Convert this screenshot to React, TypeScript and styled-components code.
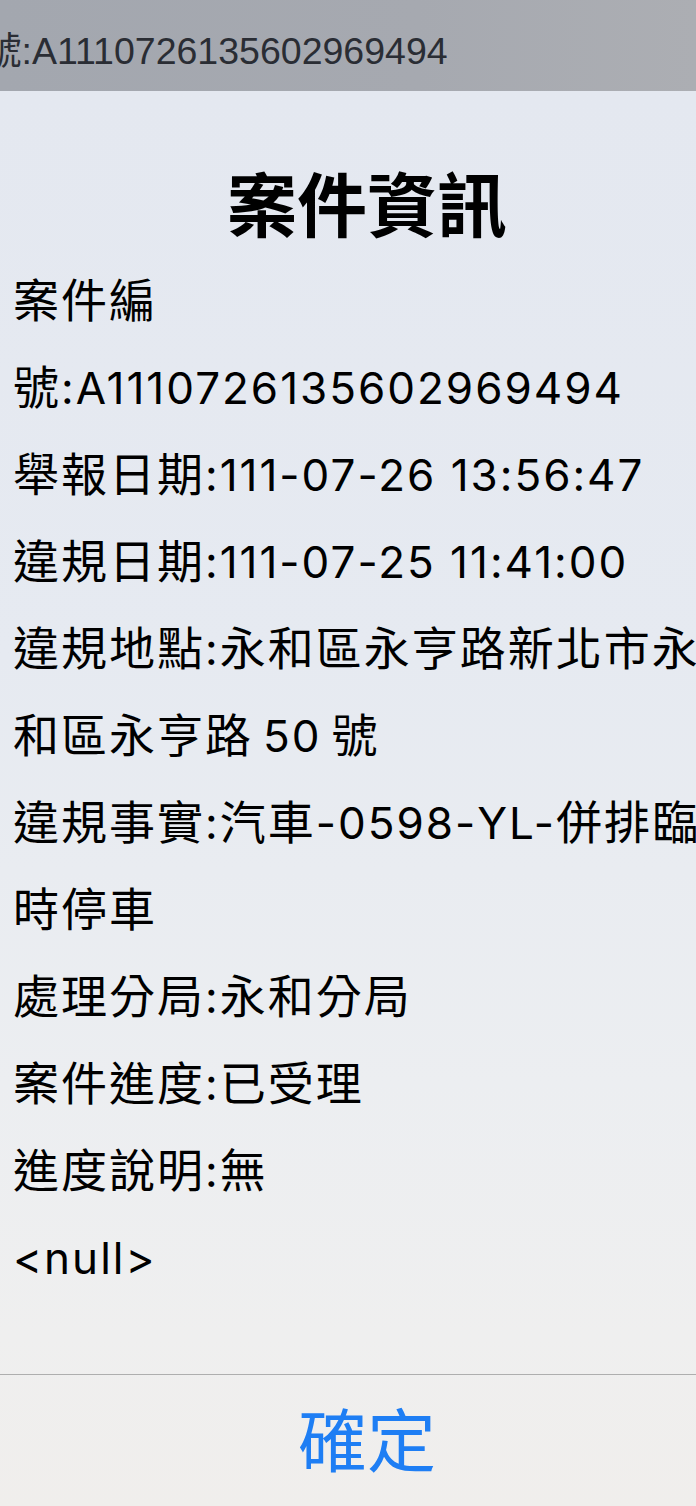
import React from "react";
import styled, { createGlobalStyle } from "styled-components";

const GlobalStyle = createGlobalStyle`
  html, body {
    margin: 0;
    padding: 0;
    background: #a6a9b0;
    overflow: hidden;
  }
  * { box-sizing: border-box; }
`;

const Screen = styled.div`
  width: 696px;
  height: 1506px;
  overflow: hidden;
  display: flex;
  flex-direction: column;
  background: linear-gradient(90deg, #a3a7af 0%, #a6a9b0 60%, #acaeb3 100%);
`;

const TopBar = styled.div`
  height: 91px;
  flex: none;
  display: flex;
  align-items: center;
  padding-top: 4px;
  overflow: hidden;
`;

const BarText = styled.span`
  margin-left: -16px;
  white-space: nowrap;
  font-family: "Liberation Sans", Arial, "Noto Sans CJK TC", sans-serif;
  font-size: 37.5px;
  color: #2a2d34;
`;

const Dialog = styled.div`
  width: 734px;
  flex: 1;
  display: flex;
  flex-direction: column;
  background: linear-gradient(
    180deg,
    #e4e8f0 0%,
    #e6eaf1 40%,
    #eceef1 70%,
    #efefef 88%,
    #f0eeec 100%
  );
`;

const Content = styled.div`
  flex: 1;
  padding: 71px 13px 0;
`;

const Title = styled.h1`
  margin: 0 0 16px;
  text-align: center;
  font-family: "Noto Sans CJK TC", sans-serif;
  font-weight: 700;
  font-size: 70px;
  line-height: 80px;
  color: #000;
`;

const InfoLine = styled.p`
  margin: 0;
  font-family: Inter, "Noto Sans CJK TC", sans-serif;
  font-size: 44px;
  letter-spacing: 2px;
  line-height: 87px;
  color: #000;
`;

const Han = styled.span`
  font-family: "Noto Sans CJK TC", sans-serif;
  font-size: 46px;
  line-height: 40px;
  letter-spacing: 2px;
`;

const Footer = styled.div`
  flex: none;
  height: 132px;
  padding-bottom: 6px;
  border-top: 1px solid #aeaeae;
  display: flex;
  align-items: center;
  justify-content: center;
`;

const ConfirmButton = styled.button`
  border: none;
  background: transparent;
  padding: 0;
  font-family: "Noto Sans CJK TC", sans-serif;
  font-size: 69px;
  line-height: 1;
  color: #1e7ef4;
  cursor: pointer;
`;

const lines = [
  "案件編號:A1110726135602969494",
  "舉報日期:111-07-26 13:56:47",
  "違規日期:111-07-25 11:41:00",
  "違規地點:永和區永亨路新北市永和區永亨路\u200950\u2009號",
  "違規事實:汽車-0598-YL-併排臨時停車",
  "處理分局:永和分局",
  "案件進度:已受理",
  "進度說明:無",
  "<null>",
];

const hanRun = /([\u3400-\u9fff\uf900-\ufaff]+)/;

function renderLine(text: string) {
  return text.split(hanRun).map((part, i) =>
    i % 2 === 1 ? <Han key={i}>{part}</Han> : <React.Fragment key={i}>{part}</React.Fragment>
  );
}

export default function App() {
  return (
    <>
      <GlobalStyle />
      <Screen>
        <TopBar>
          <BarText>號:A1110726135602969494</BarText>
        </TopBar>
        <Dialog>
          <Content>
            <Title>案件資訊</Title>
            {lines.map((l, i) => (
              <InfoLine key={i}>{renderLine(l)}</InfoLine>
            ))}
          </Content>
          <Footer>
            <ConfirmButton>確定</ConfirmButton>
          </Footer>
        </Dialog>
      </Screen>
    </>
  );
}
